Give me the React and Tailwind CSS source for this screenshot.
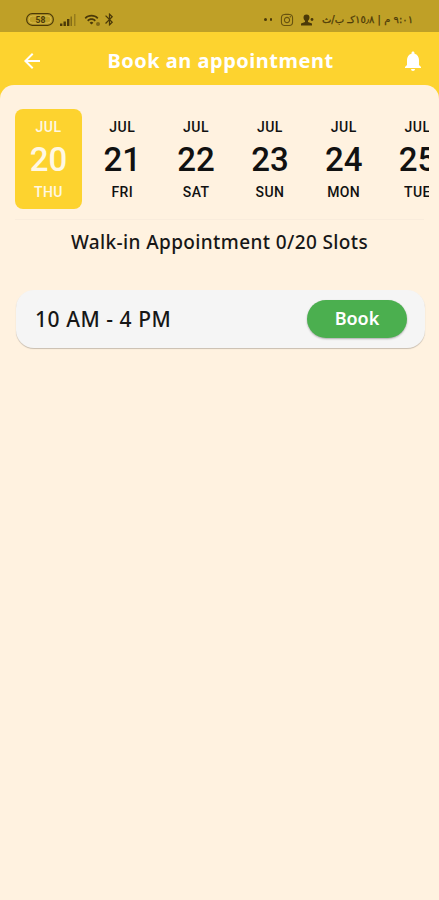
import React from "react";
import { MdArrowBack, MdNotifications, MdBluetooth, MdWifi } from "react-icons/md";
import { FaInstagram } from "react-icons/fa";

const days = [
  ["20", "THU"],
  ["21", "FRI"],
  ["22", "SAT"],
  ["23", "SUN"],
  ["24", "MON"],
  ["25", "TUE"],
];

function StatusBar() {
  return (
    <div className="flex h-8 items-center bg-[#bfa027] pl-[26px] pr-[26px] pt-[7px] text-[#4b3908]">
      <svg width="28" height="13" viewBox="0 0 28 13" className="shrink-0">
        <rect x="0.7" y="0.7" width="26.6" height="11.6" rx="5.5" fill="none" stroke="currentColor" strokeWidth="1.2" />
        <rect x="3" y="3" width="22" height="7" rx="3.5" fill="none" stroke="#d8b94a" strokeWidth="1" />
        <text x="14.5" y="9.5" textAnchor="middle" fontSize="8.5" fontWeight="700" fontFamily="Roboto, sans-serif" fill="currentColor">58</text>
      </svg>
      <svg width="17" height="12" viewBox="0 0 17 12" className="ml-[6px] shrink-0" fill="currentColor">
        <rect x="0" y="9.5" width="2.4" height="2.5" />
        <rect x="3.5" y="7.5" width="2.4" height="4.5" />
        <rect x="7" y="5" width="2.4" height="7" />
        <rect x="10.5" y="2.5" width="1.5" height="9.5" opacity="0.5" />
        <rect x="14" y="0" width="1.5" height="12" opacity="0.35" />
      </svg>
      <span className="relative ml-[7px] shrink-0">
        <MdWifi className="size-[15px]" />
        <i className="absolute bottom-[1px] -right-px size-[4px] rounded-full bg-[#806716]" />
      </span>
      <MdBluetooth className="ml-[3px] size-[15px] shrink-0" />
      <span className="ml-auto flex gap-[3px]">
        <i className="size-[2.5px] rounded-full bg-[#4b3908]" />
        <i className="size-[2.5px] rounded-full bg-[#4b3908]" />
      </span>
      <FaInstagram className="ml-[8px] size-[14px] shrink-0 opacity-75" />
      <svg width="13" height="12" viewBox="0 0 13 12" className="ml-[7px] shrink-0" fill="currentColor">
        <path d="M5.5 0.5a3 3 0 0 1 3 3c0 1.6-.8 2.8-1.5 3.3v1.3l4 1.5V11.5H0V9.6l4-1.5V6.8C3.3 6.3 2.5 5.1 2.5 3.5a3 3 0 0 1 3-3Z" />
        <circle cx="11" cy="5.5" r="1.4" />
      </svg>
      <span
        dir="rtl"
        className="ml-[3px] w-[96px] shrink-0 whitespace-nowrap font-['DejaVu_Sans',sans-serif] text-[10px] leading-3 [-webkit-text-stroke:0.25px_#4b3908]"
      >
        ٩:٠١ م | ١٥٫٨كـ ب/ث
      </span>
    </div>
  );
}

function Day({ date, name, active }) {
  return (
    <div
      className={
        "flex h-[100px] w-[67px] shrink-0 flex-col items-center rounded-[8px] pt-[9px] font-[Roboto,sans-serif] font-medium " +
        (active ? "bg-[#fdd32f] text-[#fff8e4]" : "text-[#111]")
      }
    >
      <span className="text-[14px] leading-[18px] tracking-[0.5px]">JUL</span>
      <span className="mt-[5px] text-[33px] leading-[38px]">{date}</span>
      <span className="mt-[4px] text-[14px] leading-[18px] tracking-[0.4px]">{name}</span>
    </div>
  );
}

export default function App() {
  return (
    <div className="flex h-[900px] w-[439px] flex-col overflow-hidden bg-[#fdd32f] font-['Noto_Sans',sans-serif]">
      <StatusBar />
      <header className="flex h-[53px] shrink-0 items-center px-[20px] pt-[5px] text-white">
        <MdArrowBack className="size-[24px]" />
        <h1 className="grow pr-[4px] text-center text-[20px] font-bold leading-6 tracking-[0.5px]">Book an appointment</h1>
        <MdNotifications className="-mr-[6px] size-[24px]" />
      </header>
      <main className="grow rounded-t-[14px] bg-[#fff2e0] text-[#171717]">
        <div className="mr-[10px] flex gap-[6.8px] overflow-hidden pl-[15px] pt-[24px]">
          {days.map(([date, name], i) => (
            <Day key={date} date={date} name={name} active={i === 0} />
          ))}
        </div>
        <div className="mx-[15px] mt-[10px] h-px bg-[#f9ecdc]" />
        <p className="mt-[9px] text-center text-[19px] font-medium leading-[26px] tracking-[0.38px]">
          Walk-in Appointment 0/20 Slots
        </p>
        <section className="ml-[16px] mr-[14px] mt-[35px] flex h-[58px] items-center justify-between rounded-[18px] bg-[#f5f5f5] pl-[19px] pr-[18px] shadow-[0_1px_1px_rgba(0,0,0,0.22)]">
          <span className="text-[21px] font-medium leading-7 tracking-[0.55px]">10 AM - 4 PM</span>
          <button className="h-[38px] w-[100px] rounded-full bg-[#4baf4f] pb-[2px] text-[18px] font-semibold leading-6 text-white shadow-[0_1px_2px_rgba(0,0,0,0.3)]">
            Book
          </button>
        </section>
      </main>
    </div>
  );
}
